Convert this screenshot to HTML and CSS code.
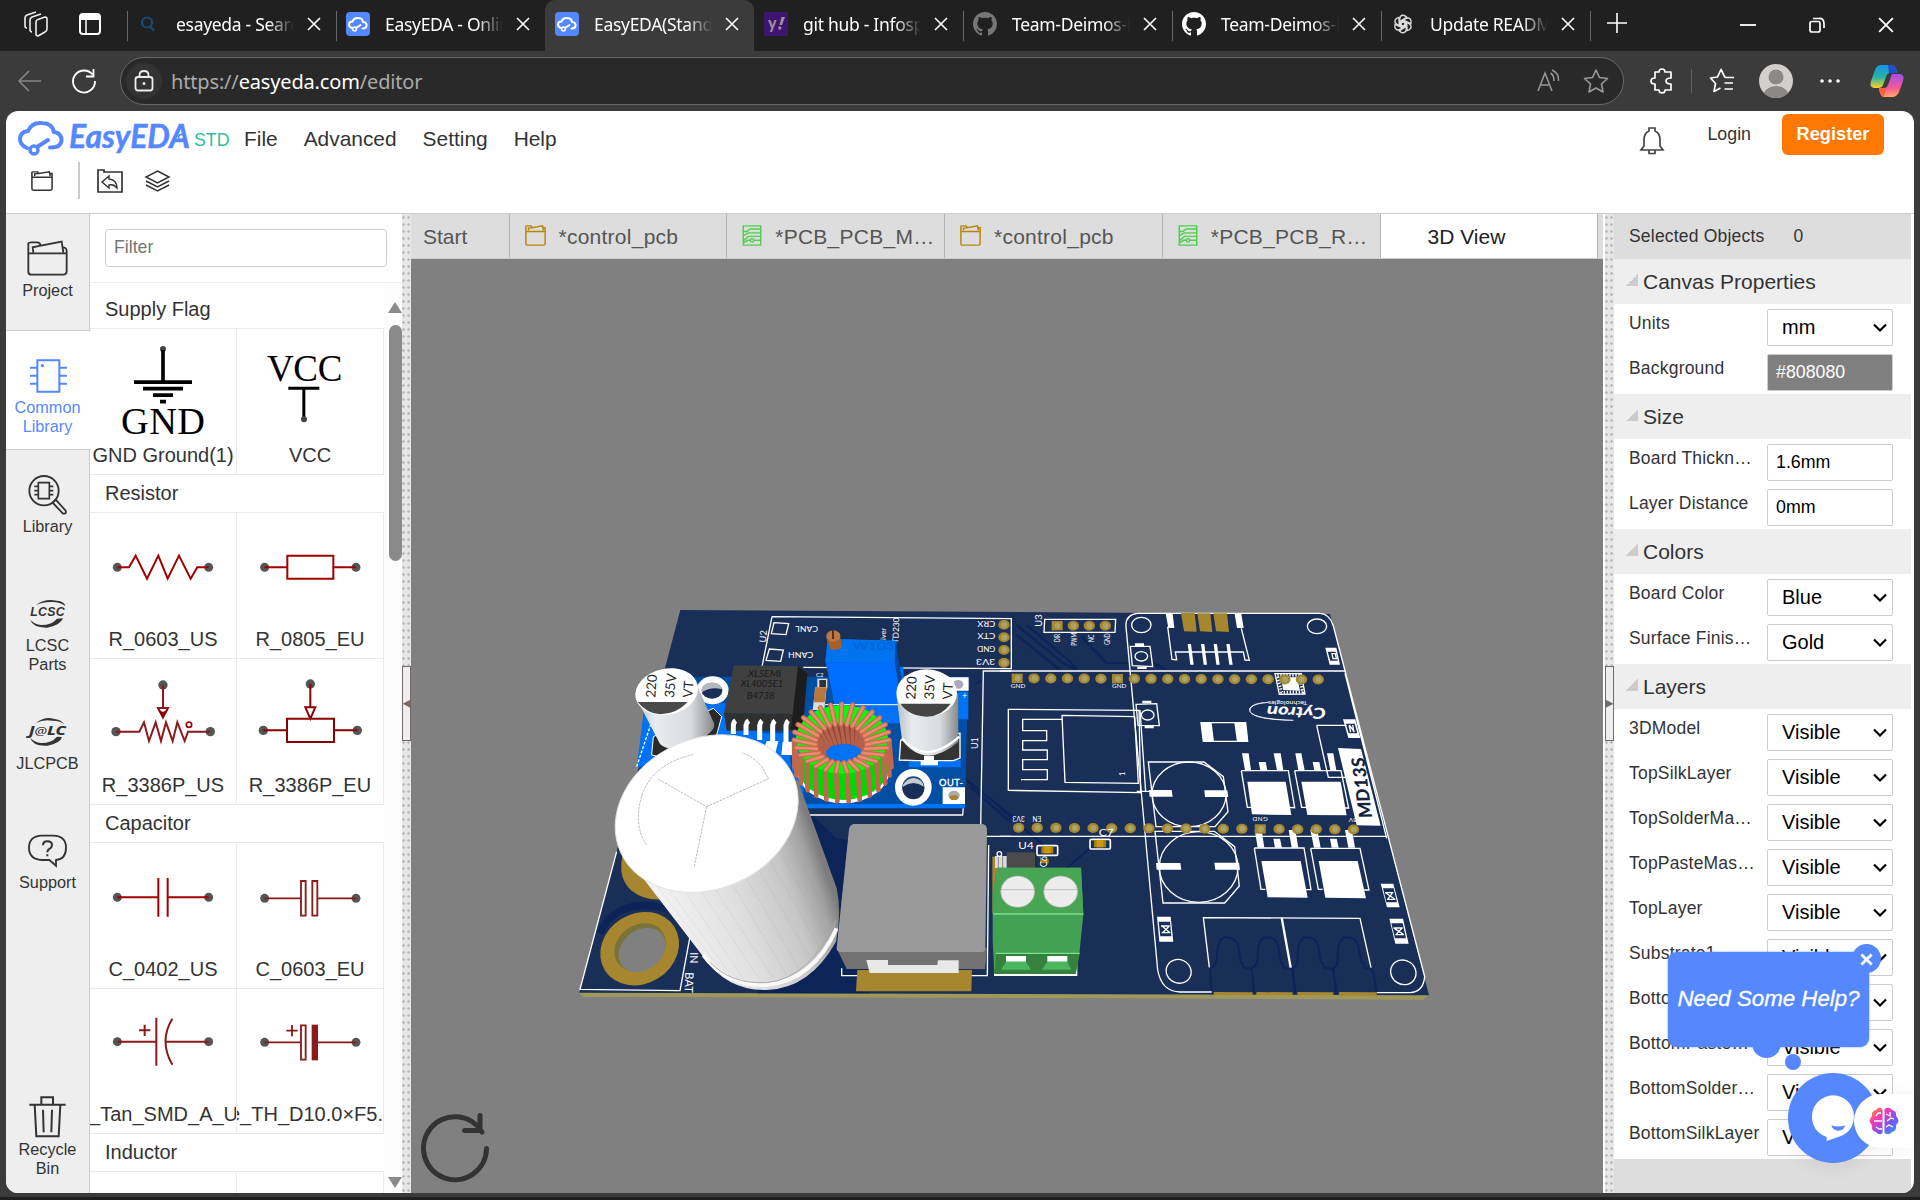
FILE: index.html
```html
<!DOCTYPE html>
<html lang="en">
<head>
<meta charset="utf-8">
<title>EasyEDA(Standard) - 3D View</title>
<link rel="stylesheet" href="styles.css">
</head>
<body>
<svg class="defs" width="0" height="0">
  <defs>
    <symbol id="close" viewBox="0 0 14 14"><path d="M1 1L13 13M13 1L1 13" fill="none" stroke="#fff" stroke-width="1.6"/></symbol>
    <symbol id="cloud" viewBox="0 0 24 24"><rect width="24" height="24" rx="4" fill="#5588ff"/><path d="M6 16Q3 15 3 12.500Q3 9.500 6.500 9.500Q8 5.500 12 6Q16.500 6 17 10Q21 10.500 20.500 14Q20 16.500 16.500 16.500M10 16L14.500 13" fill="none" stroke="#fff" stroke-width="2" stroke-linecap="round"/><circle cx="8.500" cy="17" r="1.900" fill="#5588ff" stroke="#fff" stroke-width="1.600"/></symbol>
    <symbol id="github" viewBox="0 0 16 16"><path fill="currentColor" d="M8 0C3.580 0 0 3.580 0 8c0 3.540 2.290 6.530 5.470 7.590.4.070.55-.17.55-.38 0-.19-.01-.82-.01-1.490-2.010.37-2.530-.49-2.690-.94-.09-.23-.48-.94-.82-1.130-.28-.15-.68-.52-.01-.53.63-.01 1.080.58 1.230.82.72 1.210 1.870.87 2.330.66.070-.52.28-.87.51-1.070-1.780-.2-3.640-.89-3.640-3.950 0-.87.31-1.590.82-2.150-.08-.2-.36-1.020.08-2.120 0 0 .67-.21 2.200.82.64-.18 1.320-.27 2-.27s1.360.09 2 .27c1.530-1.040 2.200-.82 2.200-.82.44 1.100.16 1.920.08 2.120.51.56.82 1.270.82 2.150 0 3.070-1.870 3.750-3.650 3.950.29.25.54.73.54 1.480 0 1.070-.01 1.930-.01 2.200 0 .21.15.46.55.38A8.010 8.010 0 0 0 16 8c0-4.420-3.580-8-8-8z"/></symbol>
    <symbol id="folder" viewBox="0 0 24 24"><path d="M1 21V2Q1 1 2 1H7L8.500 3L20 1L21 6M4 6V3.500L8.500 3M21 3H23V21Q23 23 21.500 23H2.500Q1 23 1 21M1 7.500H23" fill="none" stroke="currentColor" stroke-width="1.7"/></symbol>
    <symbol id="pcb" viewBox="0 0 22 24"><path d="M1 1H21V23H1ZM1 7.500H5L9 4.500H21M1 12.500L7 9H21M1 18L7 13H21M1 20.500L6 17.500H9M13 17.500H21" fill="none" stroke="#4fd04f" stroke-width="1.7"/><circle cx="11" cy="17.500" r="2" fill="none" stroke="#4fd04f" stroke-width="1.500"/></symbol>
    <symbol id="arrow" viewBox="0 0 14 9"><path d="M1 1.500L7 7.500L13 1.500" fill="none" stroke="#000" stroke-width="2.200"/></symbol>
  </defs>
</svg>

<header class="tabstrip">
  <div class="strip-tools">
    <svg width="26" height="26" viewBox="0 0 26 26"><g fill="none" stroke="#eee" stroke-width="1.600" stroke-linejoin="round"><path d="M13 11Q13 9 15 8.500L22 6Q24 6 24 8V18Q24 20 22 21L15 25Q13 25 13 23Z"/><path d="M9 21Q7 21 7 18V9Q7 7 9 6L18 3M4 17Q2 17 2 15V7Q2 5 4 4L13 1"/></g></svg>
    <svg width="22" height="22" viewBox="0 0 22 22"><rect x="1" y="1" width="20" height="20" rx="3" fill="none" stroke="#fff" stroke-width="2"/><path d="M1 2H21V7H1Z" fill="#fff"/><path d="M7 7V21" stroke="#fff" stroke-width="1.500"/></svg>
  </div>
  <div class="tab sep"><svg class="fav" viewBox="0 0 24 24"><circle cx="10" cy="10.500" r="5" fill="none" stroke="#174a70" stroke-width="2.200"/><path d="M13 14L17 19" stroke="#174a70" stroke-width="2.500"/></svg><span>esayeda - Search</span><svg class="x"><use href="#close"/></svg></div>
  <div class="tab sep"><svg class="fav"><use href="#cloud"/></svg><span>EasyEDA - Online</span><svg class="x"><use href="#close"/></svg></div>
  <div class="tab active"><svg class="fav"><use href="#cloud"/></svg><span>EasyEDA(Standard)</span><svg class="x"><use href="#close"/></svg></div>
  <div class="tab"><svg class="fav" viewBox="0 0 24 24"><rect width="24" height="24" fill="#3d1470"/><text x="4" y="17" font-family="Lato" font-weight="900" font-size="16" fill="#9c8f9f">y</text><path d="M15.500 13L17.500 5H21L18 13Z" fill="#9c8f9f"/><circle cx="15.800" cy="16" r="1.700" fill="#9c8f9f"/></svg><span>git hub - Infospace</span><svg class="x"><use href="#close"/></svg></div>
  <div class="tab sep"><svg class="fav dim"><use href="#github"/></svg><span>Team-Deimos-Robot</span><svg class="x"><use href="#close"/></svg></div>
  <div class="tab sep"><svg class="fav"><use href="#github"/></svg><span>Team-Deimos-Robot</span><svg class="x"><use href="#close"/></svg></div>
  <div class="tab sep"><svg class="fav" viewBox="-13 -13 26 26"><g fill="none" stroke="#ddd" stroke-width="1.500"><path id="petal" d="M-3.500 3V-5Q-3.500 -9.500 0 -9.500Q2 -9.500 4 -7.500L-2 -3.500V2"/><use href="#petal" transform="rotate(60)"/><use href="#petal" transform="rotate(120)"/><use href="#petal" transform="rotate(180)"/><use href="#petal" transform="rotate(240)"/><use href="#petal" transform="rotate(300)"/></g></svg><span>Update README</span><svg class="x"><use href="#close"/></svg></div>
  <div class="tab-new sep"><svg width="20" height="20" viewBox="0 0 20 20"><path d="M10 0V20M0 10H20" stroke="#fff" stroke-width="1.600"/></svg></div>
  <div class="window-buttons">
    <svg width="16" height="16" viewBox="0 0 16 16"><path d="M0 8H16" stroke="#fff" stroke-width="1.800"/></svg>
    <svg width="16" height="16" viewBox="0 0 16 16"><rect x="1" y="4.500" width="10" height="10.500" rx="2" fill="none" stroke="#fff" stroke-width="1.700"/><path d="M4 1.500H10Q15 1 15 7V11" fill="none" stroke="#fff" stroke-width="1.700"/></svg>
    <svg width="16" height="16"><use href="#close"/></svg>
  </div>
</header>

<nav class="addressbar">
  <svg class="back" width="24" height="22" viewBox="0 0 24 22"><path d="M23 11H1M11 1L1 11L11 21" fill="none" stroke="#858585" stroke-width="1.700"/></svg>
  <svg class="reload" width="25" height="25" viewBox="0 0 25 25"><path d="M21.500 5.500A11 11 0 1 0 24 12M22.500 0V7.500H15" fill="none" stroke="#fff" stroke-width="1.800"/></svg>
  <div class="url">
    <i class="lock"><svg width="20" height="22" viewBox="0 0 20 22"><rect x="1.500" y="7" width="17" height="13.500" rx="2.500" fill="none" stroke="#eee" stroke-width="1.800"/><path d="M5.500 7V5Q5.500 1 10 1Q14.500 1 14.500 5V7" fill="none" stroke="#eee" stroke-width="1.800"/><circle cx="10" cy="13.500" r="1.500" fill="#eee"/></svg></i>
    <span class="address">https://<b>easyeda.com</b>/editor</span>
    <svg width="24" height="24" viewBox="0 0 24 24"><path d="M1 22L8 4L15 22M3.500 16H12.500M13.500 4Q17 6 17 12M15 1Q22 4 21.500 12" fill="none" stroke="#999" stroke-width="1.500"/></svg>
    <svg width="26" height="26" viewBox="0 0 26 26"><path d="M13 2L16.500 9.500L24.500 10.500L18.500 16L20 24L13 20L6 24L7.500 16L1.500 10.500L9.500 9.500Z" fill="none" stroke="#999" stroke-width="1.600" stroke-linejoin="round"/></svg>
  </div>
  <div class="browser-tools">
    <svg class="t1" width="24" height="26" viewBox="0 0 24 26"><path d="M8 4H9Q9 1 12 1Q15 1 15 4H21V10Q16 10 16 13Q16 16 21 16V22H15Q15 25 12 25Q9 25 9 22H5V16Q1 16 1 13Q1 10 5 10V4Z" fill="none" stroke="#fff" stroke-width="1.700" stroke-linejoin="round"/></svg>
    <i class="bar"></i>
    <svg class="t2" width="26" height="26" viewBox="0 0 26 26"><path d="M16 9.500L12 1.500L8.500 9L1.500 10L6.500 15.500L5 23.500L11.500 20M16 9.500H25M15.500 15H24M15.500 21H24" fill="none" stroke="#fff" stroke-width="1.700" stroke-linejoin="round"/></svg>
    <svg class="t3" width="34" height="34" viewBox="0 0 34 34"><clipPath id="avatar"><circle cx="17" cy="17" r="17"/></clipPath><g clip-path="url(#avatar)"><rect width="34" height="34" fill="#d2d0cc"/><circle cx="17" cy="13" r="7.500" fill="#8b8885"/><ellipse cx="17" cy="32" rx="12.500" ry="10" fill="#8b8885"/></g></svg>
    <svg class="t4" width="20" height="4" viewBox="0 0 20 4"><path d="M2 2h.01M10 2h.01M18 2h.01" stroke="#fff" stroke-width="3.600" stroke-linecap="round"/></svg>
    <svg class="t5" width="34" height="32" viewBox="0 0 34 32"><defs><linearGradient id="c1" x2="0" y2="1"><stop stop-color="#1495ef"/><stop offset=".55" stop-color="#2bb4a0"/><stop offset="1" stop-color="#ffd21d"/></linearGradient><linearGradient id="c2" x2="0" y2="1"><stop stop-color="#a14ff0"/><stop offset=".6" stop-color="#f55b94"/><stop offset="1" stop-color="#ffa66a"/></linearGradient></defs><path d="M16 0H22Q26 1 27 8H20Q17 8 16 12L13 20Q12 23 8 23H4Q-1 22 1 16L5 5Q7 0 11 0Z" fill="url(#c1)"/><path d="M18 0H22Q26 1 27 8H19Z" fill="#1d4fd0"/><path d="M22 9H30Q35 10 33 16L29 27Q27 32 22 32H13Q10 31 9 23H14Q17 23 18 20Z" fill="url(#c2)"/><path d="M9 23H16L14 32Q10 31 9 23Z" fill="#f4613c"/></svg>
  </div>
</nav>

<main class="page">
  <header class="app-head">
    <div class="menu-line">
      <svg class="logo" width="176" height="42" viewBox="16 116 176 42"><path d="M27 147Q20 144 20 138Q20 131 28 130Q32 121 42 122Q52 122 54 131Q62 132 61.500 140Q60 147 50 146.500M37 146L48 139" fill="none" stroke="#5588ff" stroke-width="4" stroke-linecap="round"/><circle cx="34" cy="149" r="4" fill="#fff" stroke="#5588ff" stroke-width="3.500"/><text x="69" y="147" textLength="121" lengthAdjust="spacingAndGlyphs" font-family="Lato" font-weight="700" font-style="italic" font-size="32.500" fill="#5588ff" stroke="#5588ff" stroke-width=".5">EasyEDA</text><circle cx="181" cy="136" r="2.500" fill="#fff" stroke="#5588ff" stroke-width="1.500"/></svg>
      <span class="std">STD</span>
      <a>File</a><a>Advanced</a><a>Setting</a><a>Help</a>
    </div>
    <div class="account">
      <svg width="24" height="28" viewBox="0 0 24 28"><path d="M1 23H23L20 19V13Q20 6 15 4V1H9V4Q4 6 4 13V19ZM9 23V26.500H15V23" fill="none" stroke="#444" stroke-width="1.700"/></svg>
      <a>Login</a><button>Register</button>
    </div>
    <div class="tool-line">
      <svg width="22" height="20" viewBox="0 0 24 24" preserveAspectRatio="none"><use href="#folder" width="24" height="24"/></svg>
      <i></i>
      <svg width="26" height="24" viewBox="0 0 26 24"><path d="M1 1H7V3H25V23H1Z" fill="none" stroke="#333" stroke-width="1.700"/><path d="M5 13L12 7V10Q20 11 20 19Q17 15 12 16V19Z" fill="none" stroke="#333" stroke-width="1.400"/></svg>
      <svg width="25" height="22" viewBox="0 0 25 22"><path d="M12.500 1L24 7L12.500 13L1 7ZM1 11L12.500 17L24 11M1 15L12.500 21L24 15" fill="none" stroke="#333" stroke-width="1.500"/></svg>
    </div>
  </header>

  <div class="workspace">
    <aside class="rail">
      <div class="rail-item project"><svg viewBox="18 90 252 120"><path d="M85 185V100Q86 97 94 97H112Q120 97 122 107L185 95L190 127M100 127L98 112L122 107M190 112Q200 113 200 124V185Q199 194 190 194H95Q85 194 85 185M85 130H200" fill="none" stroke="#333" stroke-width="5.500"/></svg>Project</div>
      <div class="rail-item common"><svg viewBox="18 442 252 120"><path d="M112 449H178V543H112ZM90 471H112M90 495H112M90 519H112M178 471H201M178 495H201M178 519H201" fill="none" stroke="#5588ff" stroke-width="6"/><circle cx="127" cy="465" r="5" fill="#5588ff"/></svg>Common<br>Library</div>
      <div class="rail-item library"><svg viewBox="18 799 252 120"><g fill="none" stroke="#333"><circle cx="132" cy="840" r="44" stroke-width="5.500"/><path d="M115 816H148V864H115ZM103 827H115M103 840H115M103 852H115M148 827H160M148 840H160M148 852H160" stroke-width="5"/><path d="M158 876L167 867L197 900Q200 910 189 909Z" stroke-width="5.500"/></g></svg>Library</div>
      <div class="rail-item"><svg viewBox="18 1156 252 120"><g fill="#333"><path d="M108 1183Q135 1162 170 1170Q194 1172 196 1186Q183 1176 161 1174Q131 1172 108 1183ZM90 1226Q98 1252 142 1251Q181 1244 189 1223L171 1224Q154 1244 122 1243Q99 1240 90 1226"/><text x="91" y="1217" font-family="Liberation Sans" font-weight="700" font-style="italic" font-size="37" textLength="103">LCSC</text></g></svg>LCSC<br>Parts</div>
      <div class="rail-item"><svg viewBox="18 40 252 120"><g fill="#333"><path d="M108 67Q135 46 160 54Q184 56 194 72Q183 60 157 60Q131 55 108 67ZM90 110Q98 138 142 135Q181 128 186 109L171 108Q154 128 122 127Q99 124 90 110"/><text x="86" y="103" font-family="Noto Sans" font-weight="800" font-style="italic" font-size="37" textLength="112" lengthAdjust="spacingAndGlyphs">J<tspan font-weight="400" font-size="32">@</tspan>LC</text></g></svg>JLCPCB</div>
      <div class="rail-item support"><svg viewBox="18 397 252 120"><path d="M125 405H160Q198 406 198 441Q198 475 168 478V495L148 478H125Q87 475 87 441Q87 407 125 405Z" fill="none" stroke="#333" stroke-width="5.500"/><path d="M129 434Q129 422 142 422Q156 422 156 433Q156 440 148 445Q142 448 142 455M142 461V467" fill="none" stroke="#333" stroke-width="6"/></svg>Support</div>
      <div class="rail-item recycle"><svg viewBox="18 1198 252 120"><path d="M88 1215H197M124 1215V1193H159V1215M104 1215L109 1310H176L181 1215M129 1230L131 1298M156 1230L154 1298" fill="none" stroke="#333" stroke-width="6"/></svg>Recycle<br>Bin</div>
    </aside>

    <section class="library-panel">
      <div class="filter"><input placeholder="Filter"></div>
      <div class="scroll">
        <div class="parts">
          <h3>Supply Flag</h3>
          <div class="grid">
            <figure><svg viewBox="270 355 440 330"><circle cx="489" cy="415" r="9" fill="#444"/><path d="M489 418V514M402 514.500H576M429 534H549M459 553.500H519M480 573H498" stroke="#000" stroke-width="11"/><text x="489" y="671" text-anchor="middle" textLength="252" font-size="115" font-family="Liberation Serif">GND</text></svg><figcaption>GND Ground(1)</figcaption></figure>
            <figure><svg viewBox="710 355 440 330"><path d="M864 533H957M910.500 533V624" stroke="#000" stroke-width="9"/><circle cx="911" cy="626" r="9" fill="#444"/><text x="913" y="512" text-anchor="middle" textLength="226" font-size="111" font-family="Liberation Serif">VCC</text></svg><figcaption>VCC</figcaption></figure>
          </div>
          <h3>Resistor</h3>
          <div class="grid">
            <figure><svg viewBox="270 911 440 330"><g fill="#555"><circle cx="352" cy="1074" r="13.500"/><circle cx="626" cy="1074" r="13.500"/></g><path d="M352 1074H387L407 1039L441 1108L475 1039L503 1108L537 1039L572 1108L592 1074H626" fill="none" stroke="#a00000" stroke-width="6"/></svg><figcaption>R_0603_US</figcaption></figure>
            <figure><svg viewBox="710 911 440 330"><g fill="#555"><circle cx="793" cy="1074" r="13.500"/><circle cx="1067" cy="1074" r="13.500"/></g><path d="M793 1074H862M999 1074H1067M861 1039H999V1108H861Z" fill="none" stroke="#a00000" stroke-width="6"/></svg><figcaption>R_0805_EU</figcaption></figure>
            <figure><svg viewBox="270 -121 440 330"><g fill="#555"><circle cx="348" cy="97" r="14"/><circle cx="631" cy="97" r="14"/><circle cx="489" cy="-43" r="14"/></g><path d="M489 -43V25M348 97H418L432 69L447 125L467 69L483 125L498 69L518 125L532 69L554 125L564 97H631M474 26H504L489 55Z" fill="none" stroke="#8b1a1a" stroke-width="6"/><path d="M473 30L489 56L505 30L489 38Z" fill="#8b0000"/><circle cx="567" cy="76" r="8" fill="none" stroke="#a00000" stroke-width="5"/></svg><figcaption>R_3386P_US</figcaption></figure>
            <figure><svg viewBox="710 -121 440 330"><g fill="#555"><circle cx="789" cy="93" r="14"/><circle cx="1071" cy="93" r="14"/><circle cx="930" cy="-46" r="14"/></g><path d="M930 -46V24M789 93H860M1001 93H1071M860 58H1001V128H860ZM915 24H945L930 58Z" fill="none" stroke="#8b0000" stroke-width="6"/></svg><figcaption>R_3386P_EU</figcaption></figure>
          </div>
          <h3>Capacitor</h3>
          <div class="grid last">
            <figure><svg viewBox="270 428 440 330"><g fill="#555"><circle cx="352" cy="591" r="13.500"/><circle cx="626" cy="591" r="13.500"/></g><path d="M352 591H475M503 591H626M475 533V649M503 533V649" stroke="#a00000" stroke-width="6"/></svg><figcaption>C_0402_US</figcaption></figure>
            <figure><svg viewBox="710 428 440 330"><g fill="#555"><circle cx="793" cy="594" r="13.500"/><circle cx="1067" cy="594" r="13.500"/></g><path d="M793 594H902M951 594H1067M902 542H916V646H902ZM936 542H951V646H936Z" fill="none" stroke="#8b1a1a" stroke-width="5.500"/></svg><figcaption>C_0603_EU</figcaption></figure>
            <figure><svg viewBox="270 868 440 330"><g fill="#555"><circle cx="352" cy="1026" r="13.500"/><circle cx="626" cy="1026" r="13.500"/></g><path d="M352 1026H469M496 1026H626M469 954V1098M517 957Q476 1024 517 1095M417 992H451M434 975V1009" fill="none" stroke="#8b1a1a" stroke-width="6"/></svg><figcaption>C_Tan_SMD_A_US</figcaption></figure>
            <figure><svg viewBox="710 868 440 330"><g fill="#555"><circle cx="793" cy="1028" r="13.500"/><circle cx="1067" cy="1028" r="13.500"/></g><path d="M793 1028H902M951 1028H1067M902 977H916V1080H902ZM858 993H892M875 976V1010" fill="none" stroke="#8b1a1a" stroke-width="5.500"/><path d="M934 975H953V1082H934Z" fill="#8b1a1a"/></svg><figcaption class="cut">e_TH_D10.0×F5.</figcaption></figure>
          </div>
          <h3>Inductor</h3>
          <div class="grid"><figure></figure><figure></figure></div>
        </div>
        <div class="scrollbar"><i class="up"></i><i class="thumb"></i><i class="down"></i></div>
      </div>
    </section>

    <div class="splitter"><span>◂</span></div>

    <section class="editor">
      <div class="doc-tabs">
        <div class="doc start">Start</div>
        <div class="doc"><svg class="fold"><use href="#folder"/></svg><span>*control_pcb</span></div>
        <div class="doc"><svg class="brd"><use href="#pcb"/></svg><span>*PCB_PCB_M…</span></div>
        <div class="doc"><svg class="fold"><use href="#folder"/></svg><span>*control_pcb</span></div>
        <div class="doc"><svg class="brd"><use href="#pcb"/></svg><span>*PCB_PCB_R…</span></div>
        <div class="doc current">3D View</div>
      </div>
      <svg class="board" viewBox="411 259 1192 934">
        <defs>
          <linearGradient id="can" gradientUnits="userSpaceOnUse" x1="300" y1="980" x2="770" y2="820"><stop stop-color="#f2f2f2"/><stop offset=".4" stop-color="#e0e0e0"/><stop offset=".75" stop-color="#c6c6c6"/><stop offset=".92" stop-color="#a2a2a2"/><stop offset="1" stop-color="#7c7c7c"/></linearGradient>
          <linearGradient id="smallcan"><stop stop-color="#b8bec2"/><stop offset=".25" stop-color="#e8ecef"/><stop offset=".7" stop-color="#d8dce0"/><stop offset="1" stop-color="#85898c"/></linearGradient>
        </defs>
        <g transform="translate(570 600) scale(.333333)">
          <path d="M28 1176L2577 1184L2560 1199L1500 1194L42 1191L28 1182Z" fill="#9e985a"/>
          <path d="M331 30L2280 42L2577 1186L28 1178Z" fill="#1a2f58"/>
          <g fill="none" stroke="#0c245a" stroke-width="7">
            <path d="M1340 75L1480 190L1520 210M1340 105L1470 210M1370 75L1500 185L1520 208M1535 110L1610 190H1680M1190 540L1340 660M1200 560L1320 665M1290 625L1420 735M1490 805L1565 740M1215 250L1240 240M1750 190L1800 215"/>
            <path stroke-width="6" d="M1925 1180L1920 1105Q1942 1095 1941 1075Q1942 1012 1968 1012Q2000 1012 2005 1040L2012 1085Q2020 1088 2020 1105Q2040 1100 2046 1115L2052 1180M2052 1180L2045 1105Q2064 1095 2063 1075Q2062 1012 2090 1012Q2120 1012 2125 1040L2132 1085Q2140 1088 2140 1105Q2165 1100 2168 1115L2176 1180M2176 1180L2168 1105Q2184 1095 2183 1075Q2182 1012 2210 1012Q2240 1012 2245 1040L2252 1085Q2262 1088 2262 1105Q2285 1100 2290 1115L2299 1180M2299 1180L2290 1105Q2304 1095 2303 1075Q2302 1012 2330 1012Q2360 1012 2365 1040L2374 1085Q2384 1088 2384 1105Q2400 1100 2410 1115L2420 1180"/>
          </g>
          <path d="M720 640L800 715L840 720V770L750 730L840 740V780L900 1180H560Z" fill="#0c2458"/>
          <g fill="none" stroke="#fff" stroke-width="4">
            <path d="M606 50L1324 56V206L700 202M606 50L576 200M612 68L656 71L648 104L604 101ZM598 147L640 150L632 184L588 181Z"/>
            <path d="M140 755L30 1168L330 1172L360 1010M1324 213H1240L1232 680M1232 709H1324M680 645H1178L1180 620M815 1105V1127H1252L1256 735"/>
          </g>
          <g class="silk-text" fill="#fff">
            <text transform="translate(744 79) rotate(180)" textLength="68" lengthAdjust="spacingAndGlyphs">CANL</text><text transform="translate(730 157) rotate(180)" textLength="76" lengthAdjust="spacingAndGlyphs">CANH</text>
            <text transform="translate(1276 64) rotate(180)" textLength="54" lengthAdjust="spacingAndGlyphs">CRX</text><text transform="translate(1276 99) rotate(180)" textLength="54" lengthAdjust="spacingAndGlyphs">CTX</text><text transform="translate(1276 138) rotate(180)" textLength="55" lengthAdjust="spacingAndGlyphs">GND</text><text transform="translate(1276 178) rotate(180)" textLength="58" lengthAdjust="spacingAndGlyphs">3V3</text>
            <text transform="translate(588 128) rotate(-86)" font-size="28">U2</text><text transform="translate(985 130) rotate(-88)" font-size="25">TD230</text><text transform="translate(947 120) rotate(-88)">iver</text><text transform="translate(1224 447) rotate(-90)" font-size="27">U1</text>
            <text transform="translate(360 1057) rotate(90)" font-size="32">IN</text><text transform="translate(346 1116) rotate(92)" font-size="35" textLength="62" lengthAdjust="spacingAndGlyphs">BAT</text>
          </g>
          <path d="M230 230H1195L1185 625H700L200 590Z" fill="#004fa5"/>
          <path d="M225 310H480L660 470L680 625H1185V612H700V500H200ZM770 200H1000L1005 370H900ZM1165 275H1195V358H1165ZM1017 480H1172V502H1017ZM560 400L650 400L665 470L590 440" fill="#0072f5"/>
          <path d="M200 500L255 335" stroke="#fff" stroke-width="4" stroke-dasharray="9 5"/>
          <ellipse cx="428" cy="271" rx="48" ry="42" fill="#fff"/><ellipse cx="426" cy="272" rx="31" ry="24" fill="#1a2f58"/><path d="M396 262Q410 243 440 250Q455 256 456 268Q425 258 396 276Z" fill="#b4b9bd"/>
          <circle cx="1030" cy="562" r="44" fill="none" stroke="#fff" stroke-width="22"/><circle cx="1030" cy="565" r="33" fill="#1a2f58"/><path d="M999 555Q1012 532 1033 534Q1058 538 1062 560Q1030 538 999 560Z" fill="#c6cacd"/>
          <path d="M1118 562H1185V612H1118ZM1130 232H1196V272H1130Z" fill="#fff"/><ellipse cx="1152" cy="586" rx="17" ry="14" fill="#aaa"/><ellipse cx="1152" cy="593" rx="13" ry="7" fill="#a88632"/><ellipse cx="1165" cy="253" rx="15" ry="13" fill="#aab"/><text x="1107" y="557" font-size="28" textLength="72" fill="#fff" stroke="#fff">OUT-</text><text x="1176" y="298" font-size="28" fill="#fff">+</text>
          <text x="738" y="232" font-size="18" fill="#fff">C2</text><path d="M742 236H772V265H742Z" fill="#ddd"/><path d="M748 240H768V262H748Z" fill="#333"/><path d="M736 262H770L763 330H728Z" fill="#d9dcdc"/><path d="M735 262H770L764 307H731Z" fill="#b9773d"/>
          <path d="M766 185L772 118L976 122L995 240L988 312H795Z" fill="#0067e8"/><path d="M766 185L774 116L980 122L974 188Z" fill="#0074ef"/><path d="M976 122L996 240V310L974 188Z" fill="#00489d"/><path d="M770 188H974L990 312H793Z" fill="#006dff"/><text x="848" y="150" font-size="36" textLength="125" lengthAdjust="spacingAndGlyphs" fill="#0062d2">W103</text><path d="M765 314H985" stroke="#fff" stroke-width="3"/>
          <path d="M768 108L780 146Q795 154 816 143L809 100Z" fill="#a85f2b"/><ellipse cx="790" cy="108" rx="21" ry="17" fill="#bd7640"/><path d="M789 90V117" stroke="#422" stroke-width="5"/>
          <path d="M682 198L712 222L698 390H600ZM685 216L712 220L705 260" fill="#1d1d1d"/><path d="M492 196L684 199L668 342L462 339Z" fill="#404040"/><path d="M462 339L668 342L662 392H470Z" fill="#303030"/><g font-size="26" fill="#1b1b1b" font-style="italic"><text x="534" y="231" textLength="100" lengthAdjust="spacingAndGlyphs">XLSEMI</text><text x="512" y="262" textLength="128" lengthAdjust="spacingAndGlyphs">XL4005E1</text><text x="530" y="298" textLength="84" lengthAdjust="spacingAndGlyphs">B4738</text></g>
          <path d="M490 402V376Q491 366 497 362M528 405V376Q530 366 536 362M569 420V376Q571 366 576 362M608 424V376Q610 366 615 362M648 440V376Q650 366 655 362" fill="none" stroke="#fff" stroke-width="15"/><path d="M590 423H625L615 464L580 450ZM638 425H670V465H634Z" fill="#fff"/>
          <g id="coil"></g>
          <path d="M430 325L455 350L440 405L270 470L245 465L250 410Z" fill="#292929" stroke="#fff" stroke-width="3"/><path d="M197 290L270 432Q300 460 370 430Q440 395 432 370L378 250Z" fill="url(#smallcan)"/><ellipse cx="290" cy="275" rx="95" ry="69" transform="rotate(-12 290 275)" fill="#fff"/><path d="M203 306H353Q320 342 270 343Q230 340 203 306Z" fill="#4a4a4a"/>
          <path d="M992 420L988 480L1040 482H1150L1170 474V400Z" fill="#333" stroke="#fff" stroke-width="4"/><path d="M980 290L996 420Q1065 510 1165 425V280Z" fill="url(#smallcan)"/><path d="M996 415Q1065 500 1168 410" fill="none" stroke="#fff" stroke-width="7"/><path d="M1062 467H1092V480H1104V496H1052V480H1062Z" fill="#fff"/><ellipse cx="1070" cy="279" rx="91" ry="71" fill="#fff"/><path d="M991 311H1142Q1115 349 1070 350Q1015 347 991 311Z" fill="#444"/>
          <g font-size="40" fill="#252525" font-family="Lato"><text transform="translate(256 294) rotate(-86)">220</text><text transform="translate(311 295) rotate(-83)">35V</text><text transform="translate(367 294) rotate(-86)">VT</text><text transform="translate(1036 299) rotate(-87)">220</text><text transform="translate(1091 299) rotate(-87)">35V</text><text transform="translate(1146 299) rotate(-87)">VT</text></g>
          <path d="M157 770Q143 835 185 872Q220 900 270 898L220 790Z" fill="#a6862e"/><path d="M90 1000Q140 890 290 925" fill="none" stroke="#0c2458" stroke-width="22"/><ellipse cx="209" cy="1046" rx="123" ry="105" transform="rotate(-32 209 1046)" fill="#a6862e"/><ellipse cx="210" cy="1042" rx="82" ry="67" transform="rotate(-35 210 1042)" fill="#7a7339"/><ellipse cx="216" cy="1050" rx="76" ry="60" transform="rotate(-38 216 1050)" fill="#808080"/>
          <path d="M170 770L400 1070Q470 1172 590 1170Q720 1165 798 1025Q816 940 800 865L683 540Z" fill="url(#can)"/>
          <g fill="none" stroke="#777" stroke-opacity=".1" stroke-width="3"><path d="M240 830L430 1080M285 850L475 1115M335 860L520 1135M385 860L570 1140M430 860L610 1135M480 840L650 1125M520 820L690 1110M555 790L725 1080M590 765L750 1045M620 735L770 1010M650 700L785 970"/></g>
          <path d="M400 1065Q470 1160 590 1155Q730 1140 800 985" fill="none" stroke="#fafafa" stroke-width="12"/><path d="M420 1085Q480 1153 590 1148Q720 1135 799 960" fill="none" stroke="#aaa" stroke-width="3"/>
          <ellipse cx="410" cy="641" rx="283" ry="226" transform="rotate(-24 410 641)" fill="#fff" stroke="#e2e2e2" stroke-width="3"/><path d="M265 538L410 620L596 536L575 500Q550 470 515 458M410 620L372 802M370 464Q205 500 205 660Q208 705 230 735" fill="none" stroke="#999" stroke-width="2" stroke-dasharray="8 3"/>
          <path d="M862 1110H1206L1204 1174H858Z" fill="#a6862e"/><path d="M800 1045L830 1107H1245L1251 1045Z" fill="#727272"/><path d="M852 672H1238Q1251 674 1251 690L1246 1045Q1246 1056 1235 1056H814Q800 1056 800 1043L837 688Q839 674 852 672Z" fill="#999"/><path d="M889 1080H954V1095H1102L1104 1081H1166V1119H899Z" fill="#e8e8e8"/>
          <path d="M1267 770H1282V940H1267Z" fill="#a6862e"/>
        </g>
        <g transform="translate(1000 600) scale(.333333)">
          <g fill="none" stroke="#fff" stroke-width="4">
            <path d="M0 213H1035M0 709H1160M134 58H347L345 97H132ZM25 328L417 331L422 578L25 571ZM186 346L404 350L415 550L195 547ZM186 358H68V392H140V422H68V450H142V479H68V509H142V539H63M410 574H450"/>
            <path d="M412 40H960Q990 42 1000 78L1274 1130Q1270 1176 1230 1178H1130M412 40Q375 45 378 80L473 1110Q485 1175 540 1176H635M420 330L437 575M1035 220L1160 715"/>
            <path d="M445 486H612L670 530L684 635L645 680H468ZM465 694H643L704 740L718 858L674 909H489Z"/>
            <ellipse cx="567" cy="583" rx="111" ry="97"/><ellipse cx="596" cy="801" rx="118" ry="106"/>
            <ellipse cx="424" cy="75" rx="29" ry="23"/><ellipse cx="951" cy="79" rx="29" ry="22"/><ellipse cx="536" cy="1114" rx="38" ry="35" transform="rotate(25 536 1114)"/><ellipse cx="1210" cy="1117" rx="39" ry="36" transform="rotate(35 1210 1117)"/>
            <path d="M391 139H450L458 200L397 197ZM408 313L470 311L478 377L414 376Z"/><ellipse cx="424" cy="169" rx="19" ry="14"/><ellipse cx="443" cy="345" rx="19" ry="15"/>
            <path d="M503 80L516 178L530 179L526 156H730L735 180L748 181L724 85M724 512H865L884 623L865 622M724 512L742 622H755M884 512H1023L1046 624H1032M884 512L905 622H918M763 744H912L933 869H916M763 744L783 868H796M932 745H1080L1107 870H1090M932 745L955 868H968M950 376H1040M950 376L985 532H1040M628 1102L610 953L1080 955L1113 1103M603 368H737L743 424H610Z"/>
          </g>
          <path d="M845 953L872 1103" stroke="#fff" stroke-width="7"/>
          <g fill="#fff">
            <path d="M447 570H515L518 590H449ZM613 571H682L685 591H615ZM468 789H541L544 809H470ZM643 788H717L720 809H646ZM497 40H518L523 84H505ZM704 42H724L731 84H711ZM563 132H573L581 194H571ZM603 132H613L621 194H611ZM641 132H651L659 194H649ZM679 132H689L698 194H688Z"/>
            <path d="M603 368H635L642 425H611ZM703 369H737L744 426H711ZM742 545H857L874 645L756 643ZM904 545H1022L1040 646L922 645ZM784 783H902L923 893L803 892ZM956 783H1073L1098 895L976 893ZM842 232H892L900 272L850 270Z"/>
            <path d="M726 460H746L753 511H735ZM821 460H842L850 511H831ZM886 460H904L914 511H895ZM981 460H1000L1009 511H991ZM776 486H797L802 511H781ZM938 486H958L963 511H943ZM764 690H785L793 743H773ZM866 690H886L895 743H875ZM931 690H952L962 743H942ZM1035 690H1056L1065 743H1045ZM820 716H840L846 743H825ZM990 716H1010L1016 743H995Z"/>
            <path d="M1014 444L1083 447L1142 677L1070 676ZM405 130H432V138H405ZM412 200H440V207H412ZM427 302H454V310H427ZM434 378H461V385H434Z"/>
            <path fill-rule="evenodd" d="M976 143H1009L1020 194H989ZM983 155L991 182H1013L1007 155ZM1029 358H1066L1081 414H1045ZM1037 371L1046 400H1072L1064 371ZM471 950H512L520 1025H478ZM476 965L481 1009H514L510 965ZM1142 851H1180L1199 922H1161ZM1149 865L1159 907H1191L1181 865ZM1168 956H1209L1226 1031H1186ZM1174 970L1185 1015H1218L1208 970Z"/>
          </g>
          <g fill="none" stroke="#fff" stroke-width="4"><path d="M996 161H1006L1009 176H999ZM1048 375L1063 396M1052 396L1047 376M1062 396L1058 375M483 978H509M485 998H511M487 979L508 997M508 978L488 998M1155 878H1180M1161 898H1186M1158 879L1184 897M1178 878L1163 898M1181 984H1208M1186 1004H1212M1183 985L1210 1003M1206 984L1188 1004M825 221H904L915 282L838 283Z"/><path d="M832 226H898L908 277H845Z" stroke-dasharray="4 5" stroke-width="9"/></g>
          <path d="M543 39H584L590 95L552 94ZM592 40H631L637 96L600 94ZM640 40H681L687 96L648 94ZM641 1176L758 1177V1185H642ZM770 1176L878 1177V1185H768ZM892 1176L1000 1177V1185H892ZM1018 1176L1130 1177V1187H1015Z" fill="#a6862e"/>
          <g id="pads"></g>
          <g class="silk-text" fill="#fff"><text transform="translate(125 80) rotate(-90)" font-size="28">U3</text><text transform="translate(181 126) rotate(-90)" font-size="20" textLength="24" lengthAdjust="spacingAndGlyphs">DIR</text><text transform="translate(231 137) rotate(-90)" font-size="20" textLength="38" lengthAdjust="spacingAndGlyphs">PWM</text><text transform="translate(283 126) rotate(-90)" font-size="20" textLength="22" lengthAdjust="spacingAndGlyphs">NC</text><text transform="translate(329 134) rotate(-90)" font-size="20" textLength="34" lengthAdjust="spacingAndGlyphs">GND</text><text x="32" y="264" font-size="19" textLength="44">GND</text><text x="336" y="265" font-size="19" textLength="43">GND</text><text transform="translate(74 649) rotate(180)" font-size="20">3V3</text><text transform="translate(124 649) rotate(180)" font-size="20">EN</text><text transform="translate(803 652) rotate(180)" font-size="19" textLength="46">GND</text><text transform="translate(1070 653) rotate(180)" font-size="19">5V</text><text x="55" y="747" font-size="28" textLength="46" lengthAdjust="spacingAndGlyphs">U4</text><text x="296" y="709" font-size="26" textLength="45" lengthAdjust="spacingAndGlyphs">C7</text><text transform="translate(375 528) rotate(-90)">1</text>
          <text transform="translate(978 324) rotate(182)" font-size="46" font-weight="900" font-style="italic" textLength="178" lengthAdjust="spacingAndGlyphs">Cytron</text><text transform="translate(922 303) rotate(180)" font-size="17" textLength="118" lengthAdjust="spacingAndGlyphs">Technologies</text></g>
          <path d="M805 307Q745 312 750 335Q765 357 880 361Q740 359 749 325Q760 308 805 307" fill="#fff" stroke="#fff" stroke-width="2"/>
          <text transform="translate(1117 652) rotate(-98)" font-size="54" font-weight="900" font-style="italic" textLength="184" lengthAdjust="spacingAndGlyphs" fill="#13223f">MD13S</text>
          <path d="M20 757H105V808H20Z" fill="#4b4b4b"/><path d="M-15 768H20V804H-15Z" fill="#ddd"/><path d="M-5 768V804M8 768V804" stroke="#888" stroke-width="3"/><circle cx="-2" cy="762" r="7" fill="none" stroke="#fff" stroke-width="4"/>
          <g fill="none" stroke="#fff" stroke-width="5"><rect x="111" y="737" width="62" height="29" rx="4"/><rect x="270" y="718" width="61" height="29" rx="4"/></g><path d="M124 739H160V760H124ZM282 720H318V742H282ZM120 778H146V790H120Z" fill="#a87f10"/><path d="M132 739H152V760H132ZM290 720H310V742H290Z" fill="#c99a10"/><text transform="translate(140 802) rotate(-90)" font-size="27" fill="#fff">C6</text>
          <path d="M-18 1120H229V1128H-18ZM225 1060H232V1128H225Z" fill="#fff"/><path d="M-8 803H243L250 943L238 1062L227 1122H-17L-22 1022V880Z" fill="#42a152"/><path d="M-8 803H243L250 941H-18Z" fill="#47a553"/><path d="M-12 1061H239L227 1122H-15Z" fill="#35823f"/><path d="M-20 942H250M-12 1060H239" stroke="#7be08b" stroke-width="4"/><path d="M18 1068H78V1085H18ZM142 1068H202V1085H142Z" fill="#fff"/><path d="M18 1085H78L93 1109H3ZM142 1085H202L214 1109H126Z" fill="#4bb65d"/><g fill="#ececec" stroke="#aaa" stroke-width="2"><ellipse cx="53" cy="875" rx="51" ry="47"/><ellipse cx="182" cy="875" rx="51" ry="47"/><path d="M3 869H104M131 869H232"/></g>
        </g>
        <path d="M482 1132A31.500 31.500 0 1 0 486.500 1148.500M480 1115.500V1130.500H464.500" fill="none" stroke="#333" stroke-width="5" stroke-linecap="round" stroke-linejoin="round"/>
      </svg>
    </section>

    <div class="splitter right"><span>▸</span></div>

    <aside class="props">
      <div class="selected">Selected Objects<span>0</span></div>
      <h2>Canvas Properties</h2>
      <div class="row"><label>Units</label><div class="select">mm<svg><use href="#arrow"/></svg></div></div>
      <div class="row"><label>Background</label><div class="field gray">#808080</div></div>
      <h2>Size</h2>
      <div class="row"><label>Board Thickn…</label><div class="field">1.6mm</div></div>
      <div class="row"><label>Layer Distance</label><div class="field">0mm</div></div>
      <h2>Colors</h2>
      <div class="row"><label>Board Color</label><div class="select">Blue<svg><use href="#arrow"/></svg></div></div>
      <div class="row"><label>Surface Finis…</label><div class="select">Gold<svg><use href="#arrow"/></svg></div></div>
      <h2>Layers</h2>
      <div class="row"><label>3DModel</label><div class="select">Visible<svg><use href="#arrow"/></svg></div></div>
      <div class="row"><label>TopSilkLayer</label><div class="select">Visible<svg><use href="#arrow"/></svg></div></div>
      <div class="row"><label>TopSolderMa…</label><div class="select">Visible<svg><use href="#arrow"/></svg></div></div>
      <div class="row"><label>TopPasteMas…</label><div class="select">Visible<svg><use href="#arrow"/></svg></div></div>
      <div class="row"><label>TopLayer</label><div class="select">Visible<svg><use href="#arrow"/></svg></div></div>
      <div class="row"><label>Substrate1</label><div class="select">Visible<svg><use href="#arrow"/></svg></div></div>
      <div class="row"><label>BottomLayer</label><div class="select">Visible<svg><use href="#arrow"/></svg></div></div>
      <div class="row"><label>BottomPaste…</label><div class="select">Visible<svg><use href="#arrow"/></svg></div></div>
      <div class="row"><label>BottomSolder…</label><div class="select">Visible<svg><use href="#arrow"/></svg></div></div>
      <div class="row"><label>BottomSilkLayer</label><div class="select">Visible<svg><use href="#arrow"/></svg></div></div>
    </aside>
  </div>
</main>

<div class="help-dot big"></div><div class="help-dot small"></div>
<div class="help-close"></div>
<div class="help">Need Some Help?</div>
<svg class="help-x" viewBox="0 0 14 14"><path d="M1.500 1.500L12.500 12.500M12.500 1.500L1.500 12.500" stroke="#fff" stroke-width="3"/></svg>
<div class="chat"><svg viewBox="564 1119 270 270"><path d="M700 1186A62 63 0 0 1 762 1249Q760 1293 725 1307L680 1323V1311Q636 1295 636 1249A64 63 0 0 1 700 1186Z" fill="#fff"/><path d="M694 1276Q715 1283 735 1276Q732 1292 714 1292Q697 1291 694 1276Z" fill="#5588ff"/></svg></div>
<div class="brain"><svg width="30" height="28" viewBox="0 0 30 28"><defs><linearGradient id="br" x1="0" x2="1" y2="1"><stop stop-color="#ff9d18"/><stop offset=".35" stop-color="#f436bd"/><stop offset=".65" stop-color="#7458ef"/><stop offset="1" stop-color="#26adff"/></linearGradient></defs><path d="M13.500 2Q10-1 7 3Q2 4 3 9Q-2 14 3 18Q2 24 7 25Q10 29 13.500 26ZM15.500 2Q20-1 23 3Q28 4 27 9Q32 14 27 18Q28 24 23 25Q20 29 15.500 26Z" fill="url(#br)"/><path d="M5 14H13M7 9L9 6H12M7 20L10 22H13M17 7L21 9V5M18 14L22 11L25 12M17 20L20 18L24 20" fill="none" stroke="#fff" stroke-width="1.300"/></svg></div>
<script src="board.js"></script>
</body>
</html>
```

FILE: styles.css
```css
* { box-sizing: border-box; }
body { margin: 0; width: 1920px; height: 1200px; overflow: hidden; background: #3b3b3b; border-bottom: 3px solid #1f1f1e; font-family: "Liberation Sans", Arial, sans-serif; color: #333; }
svg { display: block; flex: none; overflow: visible; }
.defs { position: absolute; }

.tabstrip { display: flex; height: 51px; background: #202020; color: #fff; font: 18px "Noto Sans", sans-serif; }
.strip-tools { display: flex; width: 127px; height: 48px; align-items: center; padding-left: 23px; gap: 30px; }
.tab { position: relative; flex: none; width: 209px; display: flex; align-items: center; padding: 0 0 3px 10px; white-space: nowrap; }
.sep::before { content: ""; position: absolute; left: 0; top: 11px; height: 30px; width: 1px; background: #666; }
.fav { width: 24px; height: 24px; margin-right: 15px; }
.dim { color: #777; }
.tab span { width: 118px; overflow: hidden; font-size: 17.5px; letter-spacing: -.3px; -webkit-mask-image: linear-gradient(90deg, #000 78%, transparent); mask-image: linear-gradient(90deg, #000 78%, transparent); }
.x { width: 14px; height: 14px; margin-left: 13px; }
.active { background: #3b3b3b; border-radius: 10px 10px 0 0; }
.tab-new { position: relative; width: 120px; padding: 13px 0 0 17px; }
.window-buttons { display: flex; gap: 53px; margin-left: auto; padding: 17px 26px 0 0; }

.addressbar { display: flex; height: 60px; align-items: center; padding-left: 18px; background: #3b3b3b; }
.reload { margin-left: 29px; }
.url { flex: none; display: flex; align-items: center; width: 1504px; height: 48px; margin-left: 24px; border: 1px solid #686868; border-radius: 24px; background: #292929; padding: 0 14px 0 5px; }
.lock { width: 36px; height: 36px; border-radius: 50%; background: #333; display: grid; place-items: center; }
.address { flex: 1; margin-left: 9px; font: 20px "Noto Sans", sans-serif; color: #aaa; letter-spacing: -.16px; }
.address b { font-weight: 400; color: #fff; }
.url > svg + svg { margin-left: 22px; }
.browser-tools { display: flex; align-items: center; }
.t1 { margin-left: 26px; }
.bar { width: 1px; height: 24px; background: #606060; margin-left: 17px; }
.t2 { margin-left: 17px; }
.t3 { margin-left: 24px; }
.t4 { margin-left: 27px; }
.t5 { margin-left: 30px; }

.page { width: 1908px; height: 1082px; margin-left: 6px; background: #fff; border-radius: 12px; overflow: hidden; display: flex; flex-direction: column; }
.app-head { display: grid; grid-template-columns: 1fr auto; grid-template-rows: 48px 54px; height: 103px; border-bottom: 1px solid #ccc; }
.menu-line { display: flex; align-items: center; font-size: 20.900px; padding: 3px 0 0 10px; height: 53px; }
.logo { margin: -3px 2px 0 0; }
.std { width: 50px; color: #2dc09c; font-size: 17.8px; padding-top: 3px; }
.menu-line a { margin-right: 26px; }
.account { display: flex; align-items: flex-start; padding: 3px 30px 0 0; font-size: 17.8px; }
.account svg { margin-top: 13px; }
.account a { margin: 10px 31px 0 43px; }
.account button { width: 102px; height: 41px; border: 0; border-radius: 6px; background: #ff7800; color: #fff; font: bold 18.2px "Liberation Sans", sans-serif; padding: 0; }
.tool-line { display: flex; padding-left: 25px; height: 44px; align-items: center; }
.tool-line i { width: 2px; height: 37px; background: #ccc; margin: -2px 17px 0 25px; }
.tool-line svg + svg { margin-left: 22px; }

.workspace { display: flex; flex: 1; min-height: 0; }
.rail { display: flex; flex-direction: column; width: 84px; background: #eee; font-size: 16.25px; line-height: 19px; text-align: center; border-right: 1px solid #ccc; }
.rail-item { height: 118px; padding-top: 28.5px; }
.rail-item svg { width: 84px; height: 40px; margin-bottom: .5px; }
.rail-item.project { height: 116px; padding-top: 26px; }
.rail-item.common { height: 120px; padding: 26.5px 2px 0 0; background: #fff; color: #5588ff; border: solid #ccc; border-width: 1px 0; width: 85px; }
.rail-item.library { height: 117px; padding-top: 26.5px; }
.rail-item.support { padding-top: 29.5px; }
.rail-item.recycle { height: 94px; padding-top: 0; margin-top: auto; }

.library-panel { width: 312px; display: flex; flex-direction: column; }
.filter { height: 69px; padding: 15px; border-bottom: 1px solid #eee; }
.filter input { display: block; width: 282px; height: 38px; border: 1px solid #ccc; border-radius: 4px; padding: 0 8px 1px; font: 17.7px "Liberation Sans", sans-serif; }
.filter input::placeholder { color: #757575; }
.scroll { flex: 1; min-height: 0; display: flex; overflow: hidden; }
.parts { width: 294px; padding-top: 7px; }
.parts h3 { margin: 0; height: 39px; line-height: 39px; padding-left: 15px; font-size: 20px; font-weight: 400; border-bottom: 1px solid #eaeaea; }
.grid { display: grid; grid-template-columns: 147px 147px; grid-auto-rows: 146px; }
.parts h3:nth-of-type(2), .parts h3:nth-of-type(3) { margin-top: -1px; }
.grid.last { grid-template-rows: 146px 145px; }
.parts h3:nth-of-type(4) { margin-top: -1px; }
figure { margin: 0; overflow: hidden; border: solid #eaeaea; border-width: 0 1px 1px 0; }
figure svg { width: 146.670px; height: 110px; }
figcaption { height: 34px; line-height: 33px; font-size: 20px; white-space: nowrap; display: flex; justify-content: center; }
figcaption.cut { justify-content: flex-start; margin-left: -8px; }
.last figure:nth-child(n+3) figcaption { line-height: 31px; }
.scrollbar { width: 18px; background: #fcfcfc; display: flex; flex-direction: column; align-items: flex-end; padding: 19px 0 5px; }
.up, .down { border: 7px solid transparent; border-top: 0; border-bottom: 11px solid #8a8a8a; }
.thumb { width: 13px; height: 236px; border-radius: 7px; background: #8a8a8a; margin-top: 12px; }
.down { margin-top: auto; border-top: 11px solid #8a8a8a; border-bottom: 0; }
.splitter { flex: none; width: 9px; background: #e6e6e6 radial-gradient(circle, #bbb 1px, transparent 1.5px) -1px 0 / 5px 7px; display: flex; align-items: center; }
.splitter span { width: 9px; height: 75px; border: 1px solid #756a6a; background: #eee; color: #756a6a; font: 16px/72px "DejaVu Sans"; display: flex; justify-content: center; overflow: hidden; }
.splitter.right { margin-left: 2px; }

.editor { width: 1192px; display: flex; flex-direction: column; }
.doc-tabs { display: flex; height: 45px; background: #ddd; border-bottom: 1px solid #ccc; font-size: 21px; color: #555; }
.doc { width: 217.750px; display: flex; align-items: center; border-right: 1px solid #b5b5b5; white-space: nowrap; padding: 2px 0 0 14px; }
.doc span { letter-spacing: .25px; }
.start { width: 98.500px; padding-left: 12px; }
.current { background: #fff; color: #222; padding-left: 47px; }
.fold { width: 23px; height: 21px; color: #b8860b; margin: 0 12px 4px 0; }
.brd { width: 22px; height: 21px; margin: 0 12px 4px 0; }
.board { width: 1192px; height: 934px; background: #808080; font-family: "Lato", sans-serif; overflow: hidden; }
.silk-text { font-size: 22px; }

.props { width: 297px; background: #ddd; }
.selected { height: 45px; padding: 12px 15px; font-size: 17.5px; line-height: 20px; letter-spacing: .2px; }
.selected span { margin-left: 29px; }
.props h2 { margin: 0; height: 45px; padding: 0 0 0 29px; background: #eee linear-gradient(135deg, transparent 50%, #ccc 50%) 12px 15px / 12px 12px no-repeat; font-size: 21px; font-weight: 400; line-height: 46px; }
.row { height: 45px; display: flex; background: #fff; padding: 5px 0 0 15px; }
.row label { width: 138px; padding-top: 4px; font-size: 17.5px; line-height: 20px; white-space: nowrap; letter-spacing: .2px; }
.field, .select { width: 126px; height: 37px; border: 1px solid #ccc; border-radius: 2px; background: #fff; color: #000; padding: 0 8px 1px; font-size: 17.8px; display: flex; align-items: center; }
.select { padding: 0 5px 1px 14px; font-size: 20px; justify-content: space-between; }
.select svg { width: 14px; height: 9px; }
.gray { background: #808080; color: #fff; }

.help { position: absolute; left: 1668px; top: 952px; width: 201px; height: 95px; border-radius: 9px; background: #5588ff; color: #fff; font-size: 22.300px; font-style: italic; display: grid; place-items: center; white-space: nowrap; padding-bottom: 2px; -webkit-text-stroke: .3px #fff; box-shadow: 0 0 2px #5588ff; }
.help-close, .help-dot { position: absolute; border-radius: 50%; background: #5588ff; }
.help-close { left: 1852px; top: 944px; width: 29px; height: 29px; }
.help-x { position: absolute; left: 1860px; top: 953px; width: 13px; height: 13px; }
.help-dot.big { left: 1752px; top: 1029px; width: 29px; height: 29px; }
.help-dot.small { left: 1785px; top: 1054px; width: 16px; height: 16px; }
.chat { position: absolute; left: 1788px; top: 1073px; width: 90px; height: 90px; border-radius: 50%; background: #5588ff; box-shadow: 0 4px 20px #0001; }
.brain { position: absolute; left: 1854px; top: 1094px; width: 60px; height: 54px; border-radius: 27px 0 0 27px; background: #fff; display: grid; place-items: center; box-shadow: 0 0 12px #0001; }
```

FILE: board.js
```js
const NS = 'http://www.w3.org/2000/svg';
function add(parent, tag, attrs) {
  const el = document.createElementNS(NS, tag);
  for (const k in attrs) el.setAttribute(k, attrs[k]);
  parent.appendChild(el);
}

// Toroidal inductor: green core with copper turns running over rim and side.
const coil = document.getElementById('coil');
add(coil, 'ellipse', { cx: 820, cy: 505, rx: 140, ry: 105, fill: '#fff' });
add(coil, 'ellipse', { cx: 820, cy: 495, rx: 138, ry: 105, fill: '#00d900' });
add(coil, 'ellipse', { cx: 816, cy: 418, rx: 138, ry: 103, fill: '#00ff00' });
add(coil, 'ellipse', { cx: 813, cy: 428, rx: 76, ry: 58, fill: '#8e4334' });
const turns = 27;
const list = [];
for (let i = 0; i < turns; i++) list.push(-Math.PI / 2 + i * 2 * Math.PI / turns);
list.sort((a, b) => Math.sin(a) - Math.sin(b));
for (const a of list) {
  const c = Math.cos(a), s = Math.sin(a);
  if (s < 0.3) add(coil, 'path', { d: `M${822 + 56 * c} ${458 + 30 * s}L${813 + 76 * c} ${428 + 54 * s}`, stroke: '#b4604b', 'stroke-width': 11, 'stroke-linecap': 'round' });
}
add(coil, 'ellipse', { cx: 822, cy: 459, rx: 54, ry: 27, fill: '#0072f5' });
for (const a of list) {
  const c = Math.cos(a), s = Math.sin(a);
  const inner = [813 + 76 * c, 430 + 58 * s];
  const outer = [815 + 143 * c, 414 + 102 * s];
  if (s > -0.15) add(coil, 'path', { d: `M${outer}L${819 + 146 * c} ${495 + 110 * s}`, stroke: '#c1664f', 'stroke-width': 14, 'stroke-linecap': 'round' });
  add(coil, 'path', { d: `M${inner}L${outer}`, stroke: '#c96c54', 'stroke-width': 15, 'stroke-linecap': 'round' });
  add(coil, 'path', { d: `M${inner}L${outer}`, stroke: '#ee8a6d', 'stroke-width': 8, 'stroke-linecap': 'round' });
}

// Through-hole pads of the two long headers and the short connectors.
const pads = document.getElementById('pads');
function pad(x, y, square) {
  if (square) add(pads, 'rect', { x: x - 17, y: y - 14, width: 33, height: 28, fill: '#a6862e' });
  else add(pads, 'ellipse', { cx: x, cy: y, rx: 17, ry: 15, fill: '#a6862e' });
  add(pads, 'ellipse', { cx: x + 1, cy: y, rx: 9, ry: 9, fill: '#aaa564' });
}
for (let i = 0; i < 19; i++) {
  pad(52 + i * 50.15, 235 + i * 0.2, i === 0 || i === 6);
  pad(56 + i * 55.8, 683 + i * 0.3, i === 13);
}
for (let i = 0; i < 4; i++) {
  pad(172 + i * 48, 77, i === 0);
  pad(12, 74 + i * 38, false);
}
```
